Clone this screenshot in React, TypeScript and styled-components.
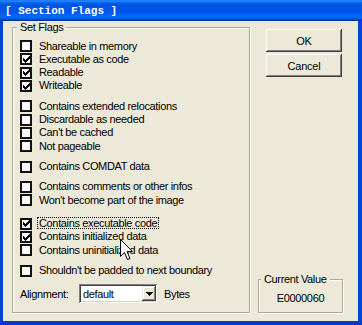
import React from 'react';
import styled, { createGlobalStyle } from 'styled-components';

const Global = createGlobalStyle`
  html, body { margin: 0; padding: 0; background: #ECE9D8; }
  body {
    width: 362px; height: 325px; overflow: hidden;
    font-family: "Liberation Sans", Arial, sans-serif;
    font-size: 11px; letter-spacing: -0.35px; color: #000;
  }
  * { box-sizing: border-box; }
`;

const Window = styled.div`
  position: relative;
  width: 362px;
  height: 325px;
  display: flex;
  flex-direction: column;
`;

const TitleBar = styled.div`
  height: 21px;
  flex: none;
  display: flex;
  align-items: center;
  padding: 1px 0 0 5px;
  background: linear-gradient(180deg, #0058EE 0%, #3593FF 4%, #288EFF 6%, #127DFF 8%, #036FFC 10%, #0262EE 14%, #0057E5 20%, #0054E3 24%, #0055EB 56%, #005BF5 66%, #026AFE 76%, #0062EF 86%, #0052D6 92%, #0040AB 94%, #003092 100%);
`;

const TitleText = styled.span`
  font-family: "Liberation Mono", "Courier New", monospace;
  font-weight: bold;
  font-size: 11px;
  letter-spacing: 0;
  color: #fff;
  white-space: pre;
`;

const Frame = styled.div`
  flex: 1;
  display: flex;
  border-left: 3px solid #0841D6;
  border-right: 4px solid #0841D6;
  border-bottom: 4px solid #0836C8;
  background: #ECE9D8;
  padding: 0 15px 8px 9px;
  gap: 8px;
`;

const GroupBox = styled.fieldset<{ $width: number }>`
  margin: 0;
  min-width: 0;
  width: ${p => p.$width}px;
  border: 1px solid #ACA899;
  box-shadow: 1px 1px 0 #fff, inset 1px 1px 0 #fff;
  display: flex;
  flex-direction: column;
`;

const FlagsBox = styled(GroupBox)`
  padding: 0 8px 9px 7px;
`;

const ValueBox = styled(GroupBox)`
  margin-top: auto;
  padding: 6px 0 7px 5px;
`;

const Legend = styled.legend`
  padding: 0 3px;
  margin-left: -3px;
  line-height: 13px;
  background: #ECE9D8;
`;

const FlagList = styled.div`
  display: flex;
  flex-direction: column;
  padding-top: 5.5px;
`;

const FlagGroup = styled.div<{ $gap: number }>`
  display: flex;
  flex-direction: column;
  margin-top: ${p => p.$gap}px;
`;

const CheckRow = styled.label`
  height: 13.33px;
  display: flex;
  align-items: center;
  gap: 7px;
  line-height: 13.33px;
  white-space: nowrap;
`;

const Box = styled.span`
  width: 12px;
  height: 12px;
  flex: none;
  border: 2px solid #111;
  background: #fff;
  display: flex;
  align-items: center;
  justify-content: center;
`;

const Caption = styled.span<{ $focused?: boolean }>`
  position: relative;
  ${p => p.$focused ? `
    &::after {
      content: "";
      position: absolute;
      left: -2px; right: -2px; top: 0px; bottom: 1px;
      border: 1px dotted #000;
    }
  ` : ''}
`;

const AlignRow = styled.div`
  margin-top: auto;
  display: flex;
  align-items: center;
  height: 19px;
`;

const AlignLabel = styled.span`
  width: 59px;
`;

const Select = styled.div`
  width: 78px;
  height: 19px;
  display: flex;
  align-items: center;
  padding: 2px 1px 2px 4px;
  background: #fff;
  box-shadow: inset 1px 1px #808080, inset -1px -1px #fff, inset 2px 2px #404040, inset -2px -2px #D4D0C8;
`;

const SelectValue = styled.span`
  flex: 1;
`;

const DropButton = styled.span`
  width: 14px;
  height: 15px;
  display: flex;
  align-items: center;
  justify-content: center;
  background: #ECE9D8;
  box-shadow: inset -1px -1px #404040, inset 1px 1px #ECE9D8, inset -2px -2px #808080, inset 2px 2px #fff;
`;

const Unit = styled.span`
  margin-left: 7px;
`;

const RightColumn = styled.div`
  width: 85px;
  display: flex;
  flex-direction: column;
  padding-top: 8px;
`;

const ButtonStack = styled.div`
  display: flex;
  flex-direction: column;
  gap: 2px;
  padding-left: 8px;
`;

const Button = styled.button`
  width: 76px;
  height: 23px;
  margin: 0;
  padding: 0;
  border: none;
  background: #ECE9D8;
  font-family: "Liberation Sans", Arial, sans-serif;
  font-size: 11px;
  letter-spacing: -0.2px;
  color: #000;
  box-shadow: inset -1px -1px #404040, inset 1px 1px #fff, inset -2px -2px #808080, inset 2px 2px #ECE9D8;
`;

const ValueText = styled.div`
  text-align: center;
  line-height: 13px;
  padding-right: 5px;
`;

const Cursor = styled.svg`
  position: absolute;
  left: 120px;
  top: 239px;
`;

const Check = () => (
  <svg width="7" height="7" viewBox="0 0 7 7" shapeRendering="crispEdges">
    <path
      d="M0 2h1v3H0z M1 3h1v3H1z M2 4h1v3H2z M3 3h1v3H3z M4 2h1v3H4z M5 1h1v3H5z M6 0h1v3H6z"
      fill="#000"
    />
  </svg>
);

type Flag = { label: string; checked?: boolean; focused?: boolean };

const groups: { gap: number; flags: Flag[] }[] = [
  {
    gap: 0,
    flags: [
      { label: 'Shareable in memory' },
      { label: 'Executable as code', checked: true },
      { label: 'Readable', checked: true },
      { label: 'Writeable', checked: true },
    ],
  },
  {
    gap: 7,
    flags: [
      { label: 'Contains extended relocations' },
      { label: 'Discardable as needed' },
      { label: "Can't be cached" },
      { label: 'Not pageable' },
    ],
  },
  { gap: 7, flags: [{ label: 'Contains COMDAT data' }] },
  {
    gap: 7,
    flags: [
      { label: 'Contains comments or other infos' },
      { label: "Won't become part of the image" },
    ],
  },
  {
    gap: 10,
    flags: [
      { label: 'Contains executable code', checked: true, focused: true },
      { label: 'Contains initialized data', checked: true },
      { label: 'Contains uninitialized data' },
    ],
  },
  { gap: 7, flags: [{ label: "Shouldn't be padded to next boundary" }] },
];

export default function App() {
  return (
    <>
      <Global />
      <Window>
        <TitleBar>
          <TitleText>[ Section Flags ]</TitleText>
        </TitleBar>
        <Frame>
          <FlagsBox $width={238}>
            <Legend>Set Flags</Legend>
            <FlagList>
              {groups.map((g, gi) => (
                <FlagGroup key={gi} $gap={g.gap}>
                  {g.flags.map(f => (
                    <CheckRow key={f.label}>
                      <Box>{f.checked && <Check />}</Box>
                      <Caption $focused={f.focused}>{f.label}</Caption>
                    </CheckRow>
                  ))}
                </FlagGroup>
              ))}
            </FlagList>
            <AlignRow>
              <AlignLabel>Alignment:</AlignLabel>
              <Select>
                <SelectValue>default</SelectValue>
                <DropButton>
                  <svg width="7" height="4" viewBox="0 0 7 4" shapeRendering="crispEdges">
                    <path d="M0 0h7v1H0z M1 1h5v1H1z M2 2h3v1H2z M3 3h1v1H3z" fill="#000" />
                  </svg>
                </DropButton>
              </Select>
              <Unit>Bytes</Unit>
            </AlignRow>
          </FlagsBox>
          <RightColumn>
            <ButtonStack>
              <Button>OK</Button>
              <Button>Cancel</Button>
            </ButtonStack>
            <ValueBox $width={85}>
              <Legend>Current Value</Legend>
              <ValueText>E0000060</ValueText>
            </ValueBox>
          </RightColumn>
        </Frame>
        <Cursor width="13" height="21" viewBox="0 0 13 21">
          <path
            d="M0.5 0.5 V17.5 L4.5 13.5 L7.5 20.5 L10 19.5 L7 12.5 H12.5 Z"
            fill="#fff"
            stroke="#000"
            strokeWidth="1"
            strokeLinejoin="miter"
          />
        </Cursor>
      </Window>
    </>
  );
}
